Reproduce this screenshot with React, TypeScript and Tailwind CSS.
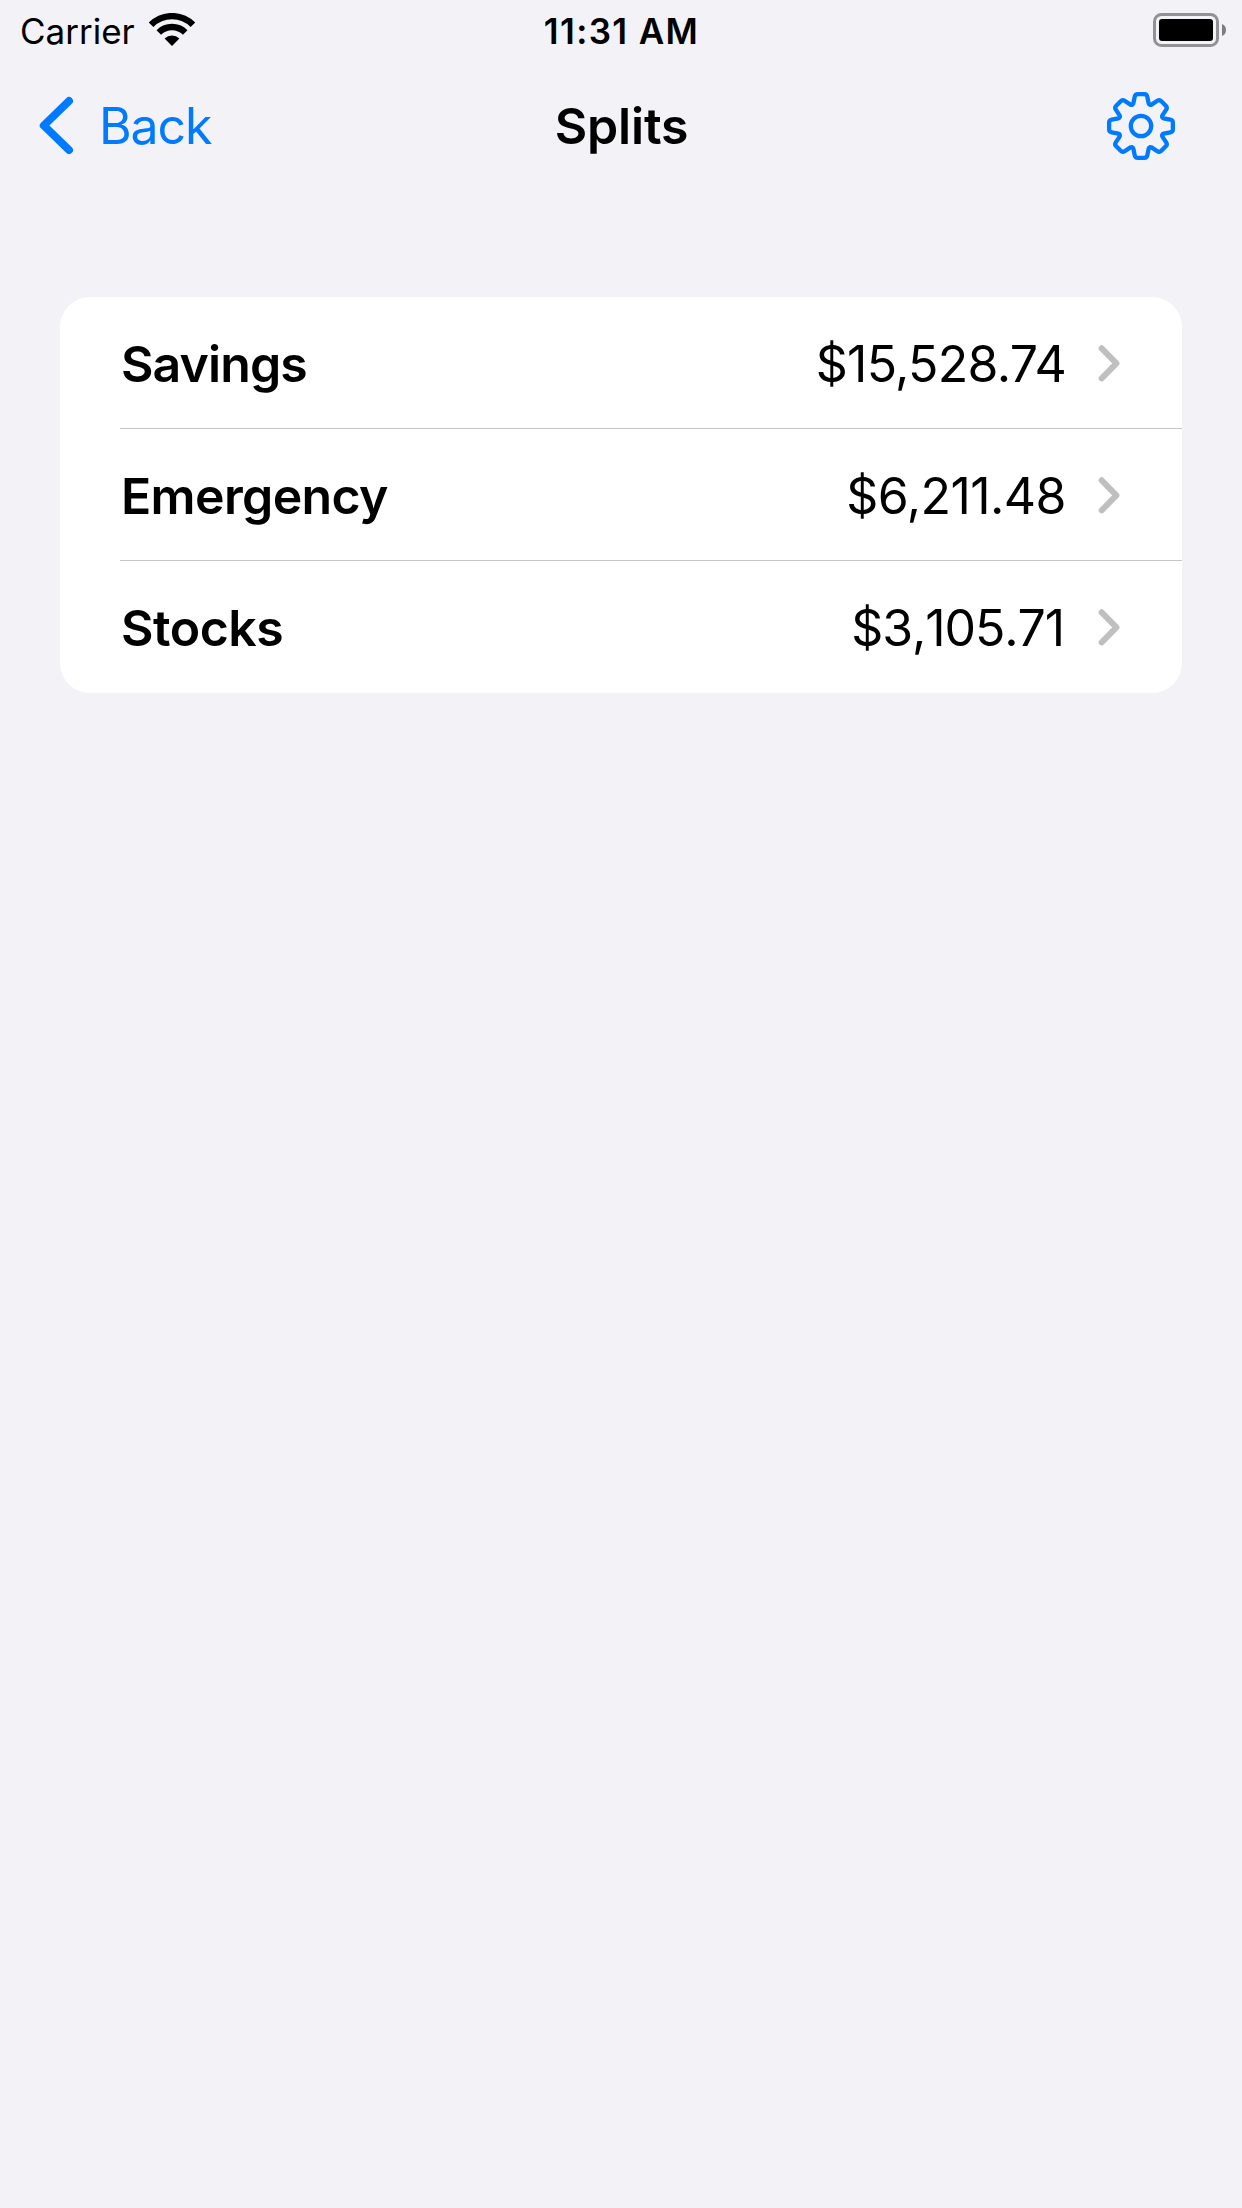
type Point = [number, number];

const splits = [
  { name: "Savings", amount: "$15,528.74", nameClass: "tracking-[-0.9px]", amountClass: "tracking-[-0.69px]" },
  { name: "Emergency", amount: "$6,211.48", nameClass: "tracking-[-0.65px]", amountClass: "tracking-[-0.55px]" },
  { name: "Stocks", amount: "$3,105.71", nameClass: "tracking-[-0.5px]", amountClass: "pr-[2px] tracking-[-1.1px] [font-kerning:none]" },
];

// Outline of an eight-toothed gear, with each corner softened by a curve.
function gearPath(): string {
  const polar = (deg: number, r: number): Point => {
    const a = (deg * Math.PI) / 180;
    return [35 + r * Math.sin(a), 35 - r * Math.cos(a)];
  };
  const pts: { p: Point; d: number }[] = [];
  for (let i = 0; i < 8; i++) {
    const c = i * 45;
    pts.push({ p: polar(c - 20, 23), d: 1 });
    pts.push({ p: polar(c - 10.2, 32.4), d: 2.6 });
    pts.push({ p: polar(c + 10.2, 32.4), d: 2.6 });
    pts.push({ p: polar(c + 20, 23), d: 1 });
  }
  const toward = (a: Point, b: Point, d: number): Point => {
    const l = Math.hypot(b[0] - a[0], b[1] - a[1]);
    const t = Math.min(d / l, 0.5);
    return [a[0] + (b[0] - a[0]) * t, a[1] + (b[1] - a[1]) * t];
  };
  const f = (p: Point) => `${p[0].toFixed(2)} ${p[1].toFixed(2)}`;
  return (
    pts
      .map(({ p, d }, i) => {
        const prev = pts[(i + pts.length - 1) % pts.length].p;
        const next = pts[(i + 1) % pts.length].p;
        return `${i ? "L" : "M"}${f(toward(p, prev, d))}Q${f(p)} ${f(toward(p, next, d))}`;
      })
      .join("") + "Z"
  );
}

function Wifi() {
  return (
    <svg width="46" height="34" viewBox="0 0 46 34" className="ml-[14px]" fill="none" stroke="#000">
      <path d="M2.1 11.8A29.5 29.5 0 0 1 43.9 11.8" strokeWidth="6.4" />
      <path d="M9.8 19.5A18.7 18.7 0 0 1 36.2 19.5" strokeWidth="6.4" />
      <path d="M23 33L15.600 25.600A10.500 10.500 0 0 1 30.400 25.600Z" fill="#000" stroke="none" />
    </svg>
  );
}

function Battery() {
  return (
    <svg width="74" height="34" viewBox="0 0 74 34" className="ml-auto">
      <rect x="1.5" y="1.5" width="63" height="31" rx="7" fill="none" stroke="#929194" strokeWidth="3" />
      <rect x="6" y="6" width="54" height="22" rx="3" fill="#000" />
      <path d="M69 11C71.600 12 73 14.300 73 17S71.600 22 69 23Z" fill="#7d7d80" />
    </svg>
  );
}

function StatusBar() {
  return (
    <header className="grid h-[60px] grid-cols-3 items-center text-[35px] leading-[42px]">
      <div className="flex items-center pl-[20px]">
        <span className="pt-[2px]">Carrier</span>
        <Wifi />
      </div>
      <div className="pt-[2px] pl-px text-center font-semibold tracking-[1.38px]">11:31 AM</div>
      <div className="flex pr-[15px]">
        <Battery />
      </div>
    </header>
  );
}

function NavBar() {
  return (
    <nav className="grid h-[132px] grid-cols-3 items-center text-[50px] leading-[60px]">
      <button className="flex items-center pl-[38px] text-[#007aff]">
        <svg width="38" height="62" viewBox="0 0 38 62" fill="none" stroke="currentColor" strokeWidth="8" strokeLinecap="round" strokeLinejoin="round">
          <path d="M31 6L5.800 30.500L31 55" />
        </svg>
        <span className="pl-[23px] tracking-[-1.1px]">Back</span>
      </button>
      <h1 className="pl-px text-center font-semibold tracking-[-0.17px]">Splits</h1>
      <button className="ml-auto pr-[66px] text-[#007aff]" aria-label="Settings">
        <svg width="70" height="70" viewBox="0 0 70 70" fill="none" stroke="currentColor" strokeWidth="4.3" strokeLinejoin="round">
          <path d={gearPath()} />
          <circle cx="35" cy="35" r="10.2" />
        </svg>
      </button>
    </nav>
  );
}

export default function App() {
  return (
    <div className="min-h-screen bg-[#f2f2f7] font-['Inter',sans-serif] text-black">
      <StatusBar />
      <NavBar />
      <main className="px-[60px] pt-[105px]">
        <ul className="overflow-hidden rounded-[30px] bg-white pl-[60px] text-[50px] leading-[60px]">
          {splits.map((s) => (
            <li key={s.name} className="flex h-[132px] items-center border-b border-[#c6c6c8] pt-[2px] pr-[60px] last:border-transparent">
              <span className={`pl-px font-semibold ${s.nameClass}`}>{s.name}</span>
              <span className={`ml-auto ${s.amountClass}`}>{s.amount}</span>
              <svg width="26" height="40" viewBox="0 0 26 40" className="-mt-[1px] ml-[30px]" fill="none" stroke="#bfbfbf" strokeWidth="6" strokeLinecap="round" strokeLinejoin="round">
                <path d="M5.700 5.300L20.400 20.300L5.700 35.300" />
              </svg>
            </li>
          ))}
        </ul>
      </main>
    </div>
  );
}
